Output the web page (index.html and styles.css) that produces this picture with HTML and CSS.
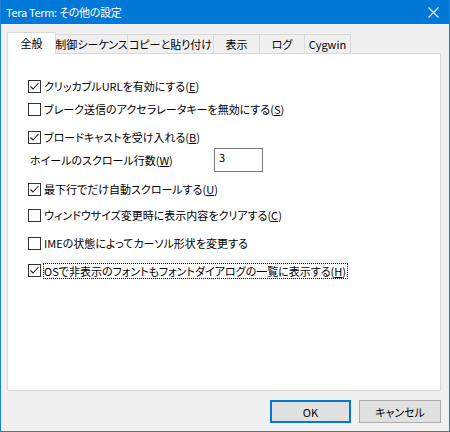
FILE: index.html
```html
<!DOCTYPE html>
<html lang="ja">
<head>
<meta charset="utf-8">
<title>Tera Term: その他の設定</title>
<link rel="stylesheet" href="styles.css">
</head>
<body>
<div class="window">
  <div class="titlebar">
    <span class="title">Tera Term: その他の設定</span>
    <span class="close">
      <svg width="11" height="11" viewBox="0 0 11 11"><path d="M0.5 0.5 L10.5 10.5 M10.5 0.5 L0.5 10.5" stroke="#fff" stroke-width="1.1" fill="none"/></svg>
    </span>
  </div>
  <div class="client">
    <div class="tabs">
      <div class="tab active w1">全般</div>
      <div class="tab w2">制御シーケンス</div>
      <div class="tab w3">コピーと貼り付け</div>
      <div class="tab w4">表示</div>
      <div class="tab w5">ログ</div>
      <div class="tab w6">Cygwin</div>
    </div>
    <div class="panel">
      <div class="row">
        <span class="cb checked"><svg width="11" height="11" viewBox="0 0 11 11"><path d="M1.5 5.5 L4 8 L9.5 2" stroke="#222" stroke-width="1.1" fill="none"/></svg></span>
        <span class="label">クリッカブルURLを有効にする(<u>E</u>)</span>
      </div>
      <div class="row mt7">
        <span class="cb"></span>
        <span class="label">ブレーク送信のアクセラレータキーを無効にする(<u>S</u>)</span>
      </div>
      <div class="row mt12">
        <span class="cb checked"><svg width="11" height="11" viewBox="0 0 11 11"><path d="M1.5 5.5 L4 8 L9.5 2" stroke="#222" stroke-width="1.1" fill="none"/></svg></span>
        <span class="label">ブロードキャストを受け入れる(<u>B</u>)</span>
      </div>
      <div class="row editrow mt3">
        <span class="plain">ホイールのスクロール行数(<u>W</u>)</span>
        <div class="edit">3</div>
      </div>
      <div class="row mt9">
        <span class="cb checked"><svg width="11" height="11" viewBox="0 0 11 11"><path d="M1.5 5.5 L4 8 L9.5 2" stroke="#222" stroke-width="1.1" fill="none"/></svg></span>
        <span class="label">最下行でだけ自動スクロールする(<u>U</u>)</span>
      </div>
      <div class="row mt10">
        <span class="cb"></span>
        <span class="label">ウィンドウサイズ変更時に表示内容をクリアする(<u>C</u>)</span>
      </div>
      <div class="row mt12">
        <span class="cb"></span>
        <span class="label">IMEの状態によってカーソル形状を変更する</span>
      </div>
      <div class="row focusrow mt11">
        <span class="cb checked"><svg width="11" height="11" viewBox="0 0 11 11"><path d="M1.5 5.5 L4 8 L9.5 2" stroke="#222" stroke-width="1.1" fill="none"/></svg></span>
        <span class="label focus">OSで非表示のフォントもフォントダイアログの一覧に表示する(<u>H</u>)</span>
      </div>
    </div>
    <div class="buttons">
      <button class="btn default">OK</button>
      <button class="btn cancel">キャンセル</button>
    </div>
  </div>
</div>
</body>
</html>
```
FILE: styles.css
```css
html, body {
  margin: 0;
  padding: 0;
  background: #f0f0f0;
}
body {
  font-family: "Noto Sans CJK JP", "Noto Sans", sans-serif;
  font-size: 11px;
  font-feature-settings: "palt";
  color: #000;
}
.window {
  width: 450px;
  height: 432px;
  box-sizing: border-box;
  border: 1px solid #1883d7;
  border-top: 0;
  background: #f0f0f0;
  display: flex;
  flex-direction: column;
}
.titlebar {
  height: 24px;
  background: #0078d7;
  color: #fff;
  display: flex;
  align-items: center;
  justify-content: space-between;
  padding: 0 10px 0 5px;
  flex: 0 0 auto;
}
.title {
  font-size: 11px;
  letter-spacing: -0.3px;
  line-height: 16px;
}
.close {
  display: flex;
  align-items: center;
}
.client {
  padding: 8px 8px 0 6px;
  display: flex;
  flex-direction: column;
}
.tabs {
  display: flex;
  align-items: flex-end;
  height: 21px;
}
.tab {
  box-sizing: border-box;
  height: 19px;
  border: 1px solid #d9d9d9;
  border-bottom: 0;
  margin-left: -1px;
  background: #f0f0f0;
  display: flex;
  align-items: center;
  justify-content: center;
  line-height: 14px;
  white-space: nowrap;
}
.tab.active {
  height: 22px;
  margin-left: 0;
  margin-bottom: -1px;
  background: #fff;
  position: relative;
  z-index: 1;
  padding-bottom: 2px;
}
.w1 { width: 49px; }
.w2 { width: 73px; }
.w3 { width: 87px; }
.w4 { width: 47px; }
.w5 { width: 46px; }
.w6 { width: 47px; }
.panel {
  box-sizing: border-box;
  height: 338px;
  background: #fff;
  border: 1px solid #d9d9d9;
  padding: 24px 0 0 20px;
  display: flex;
  flex-direction: column;
}
.row {
  display: flex;
  align-items: center;
  height: 16px;
}
.mt3 { margin-top: 3px; }
.mt7 { margin-top: 7px; }
.mt9 { margin-top: 9px; }
.mt10 { margin-top: 10px; }
.mt11 { margin-top: 11px; }
.mt12 { margin-top: 12px; }
.cb {
  box-sizing: border-box;
  width: 13px;
  height: 13px;
  border: 1px solid #333;
  background: #fff;
  display: flex;
  align-items: center;
  justify-content: center;
  flex: 0 0 auto;
  margin-right: 2px;
}
.label {
  line-height: 14px;
  white-space: nowrap;
  border: 1px solid transparent;
  padding: 0 1px 0 0;
}
.label.focus {
  border: 1px dotted #000;
}
.focusrow {
  height: 17px;
}
.editrow {
  height: 24px;
}
.plain {
  width: 184px;
  padding-left: 2px;
  white-space: nowrap;
}
.edit {
  box-sizing: border-box;
  width: 49px;
  height: 24px;
  border: 1px solid #7a7a7a;
  background: #fff;
  padding: 1px 4px;
  line-height: 14px;
}
.buttons {
  margin-top: 9px;
  display: flex;
  justify-content: flex-end;
  gap: 8px;
  padding-right: 0;
}
.btn {
  box-sizing: border-box;
  height: 23px;
  background: #e1e1e1;
  border: 1px solid #adadad;
  font-family: inherit;
  font-size: 11px;
  font-feature-settings: "palt";
  color: #000;
  padding: 0;
  margin: 0;
}
.btn.default {
  width: 81px;
  border: 2px solid #0078d7;
}
.btn.cancel {
  width: 82px;
}
```
